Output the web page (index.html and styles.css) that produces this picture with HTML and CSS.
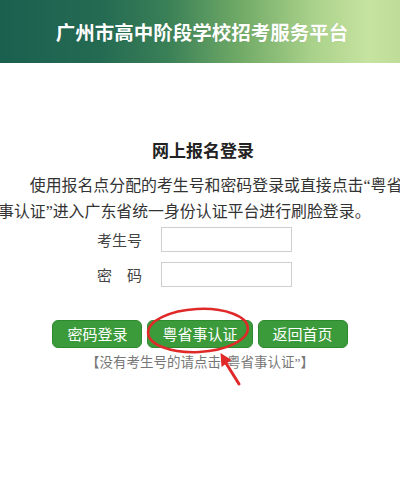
FILE: index.html
```html
<!DOCTYPE html>
<html lang="zh-CN">
<head>
<meta charset="utf-8">
<title>网上报名登录</title>
<link rel="stylesheet" href="styles.css">
</head>
<body>
<header class="banner">
  <h1 class="banner-title">广州市高中阶段学校招考服务平台</h1>
</header>
<main class="login">
  <h2 class="login-title">网上报名登录</h2>
  <p class="login-intro">使用报名点分配的考生号和密码登录或直接点击“粤省事认证”进入广东省统一身份认证平台进行刷脸登录。</p>
  <form class="login-form">
    <label class="form-row"><span class="form-label">考生号</span><input class="form-input" type="text"></label>
    <label class="form-row"><span class="form-label">密　码</span><input class="form-input" type="password"></label>
  </form>
  <div class="actions">
    <button class="btn" type="button">密码登录</button>
    <button class="btn" type="button">粤省事认证</button>
    <button class="btn" type="button">返回首页</button>
  </div>
  <p class="hint">【没有考生号的请点击“粤省事认证”】</p>
</main>
<svg class="annotation" width="400" height="500" viewBox="0 0 400 500">
  <ellipse cx="198" cy="330.5" rx="50" ry="21.5" fill="none" stroke="#e02a2a" stroke-width="2.5" transform="rotate(-3 198 330.5)"/>
  <line x1="239" y1="384" x2="224" y2="360" stroke="#e02a2a" stroke-width="3" stroke-linecap="round"/>
  <polygon points="220.5,353 221.5,367 231.5,360" fill="#e02a2a"/>
</svg>
</body>
</html>
```
FILE: styles.css
```css
html, body {
  margin: 0;
  padding: 0;
  overflow: hidden;
  background: #fff;
}
body {
  position: relative;
  width: 400px;
  height: 500px;
  font-family: "Noto Sans CJK SC", sans-serif;
  color: #333;
}
.banner {
  height: 63px;
  display: flex;
  align-items: center;
  justify-content: center;
  background: linear-gradient(90deg, #1b604f 0%, #246a52 25%, #3a8057 42%, #70aa66 60%, #a9d18a 78%, #c6e3a0 92%, #bfdd98 100%);
}
.banner-title {
  margin: 0;
  padding-left: 4px;
  font-size: 19.5px;
  font-weight: 700;
  color: #fff;
  line-height: 1;
  text-shadow: 0 0 1px rgba(0,0,0,0.15);
}
.login {
  display: flex;
  flex-direction: column;
  align-items: center;
}
.login-title {
  margin: 77px 0 0 6px;
  font-size: 17px;
  line-height: 20px;
  font-weight: 700;
  color: #222;
}
.login-intro {
  align-self: flex-start;
  margin: 13px 0 0 -2px;
  width: 412px;
  font-family: "Liberation Serif", "Noto Sans CJK SC", serif;
  font-size: 15.9px;
  line-height: 26px;
  text-indent: 2em;
  color: #333;
}
.login-form {
  align-self: flex-start;
  margin: 2px 0 0 97px;
  display: flex;
  flex-direction: column;
  gap: 10px;
}
.form-row {
  display: flex;
  align-items: center;
  gap: 18px;
}
.form-label {
  width: 46px;
  font-size: 15px;
  color: #444;
  white-space: nowrap;
}
.form-input {
  box-sizing: border-box;
  width: 131px;
  height: 25px;
  margin: 0;
  border: 1px solid #cfcfcf;
  background: #fff;
  padding: 0 4px;
}
.actions {
  margin-top: 33px;
  display: flex;
  gap: 5px;
}
.btn {
  height: 28px;
  padding: 0 14px;
  border: 1px solid #2f8a2f;
  border-radius: 6px;
  background: #3b9b3b;
  color: #fff;
  font-family: "Noto Sans CJK SC", sans-serif;
  font-size: 15px;
  line-height: 26px;
}
.hint {
  margin: 6px 0 0;
  font-family: "Liberation Serif", "Noto Sans CJK SC", serif;
  font-size: 13.5px;
  line-height: 17px;
  color: #777;
}
.annotation {
  position: absolute;
  left: 0;
  top: 0;
  pointer-events: none;
}
```
